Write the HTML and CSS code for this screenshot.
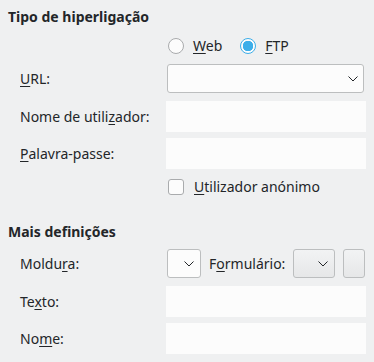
FILE: index.html
```html
<!DOCTYPE html>
<html>
<head>
<meta charset="utf-8">
<link rel="stylesheet" href="styles.css">
</head>
<body>
<div class="page">
  <div class="heading h1">Tipo de hiperligação</div>
  <div class="row radio-row">
    <div class="label"></div>
    <div class="control radios">
      <span class="radio"></span><span class="opt"><u>W</u>eb</span>
      <span class="radio checked"></span><span class="opt"><u>F</u>TP</span>
    </div>
  </div>
  <div class="row combo-row url-row">
    <div class="label"><u>U</u>RL:</div>
    <div class="control">
      <div class="combo wide">
        <svg class="chev" width="10" height="6" viewBox="0 0 10 6"><path d="M0.5 0.5 L5 5 L9.5 0.5" fill="none" stroke="#232629" stroke-width="1"/></svg>
      </div>
    </div>
  </div>
  <div class="row input-row r-user">
    <div class="label">Nome de utili<u>z</u>ador:</div>
    <div class="control"><div class="input"></div></div>
  </div>
  <div class="row input-row r-pass">
    <div class="label"><u>P</u>alavra-passe:</div>
    <div class="control"><div class="input"></div></div>
  </div>
  <div class="row check-row">
    <div class="label"></div>
    <div class="control checks">
      <span class="check"></span><span class="opt"><u>U</u>tilizador anónimo</span>
    </div>
  </div>
  <div class="heading h2">Mais definições</div>
  <div class="row combo-row frame-row">
    <div class="label">Moldu<u>r</u>a:</div>
    <div class="control frame">
      <div class="combo small">
        <svg class="chev" width="10" height="6" viewBox="0 0 10 6"><path d="M0.5 0.5 L5 5 L9.5 0.5" fill="none" stroke="#232629" stroke-width="1"/></svg>
      </div>
      <span class="inline-label">F<u>o</u>rmulário:</span>
      <div class="combo small btnlike form">
        <svg class="chev" width="10" height="6" viewBox="0 0 10 6"><path d="M0.5 0.5 L5 5 L9.5 0.5" fill="none" stroke="#232629" stroke-width="1"/></svg>
      </div>
      <div class="button"></div>
    </div>
  </div>
  <div class="row input-row r-text">
    <div class="label">Te<u>x</u>to:</div>
    <div class="control"><div class="input"></div></div>
  </div>
  <div class="row input-row r-name">
    <div class="label">No<u>m</u>e:</div>
    <div class="control"><div class="input"></div></div>
  </div>
</div>
</body>
</html>
```

FILE: styles.css
```css
html, body {
  margin: 0;
  padding: 0;
  background: #eff0f1;
}
body {
  font-family: "Noto Sans", "Open Sans", sans-serif;
  font-size: 14px;
  color: #232629;
}
.page {
  width: 374px;
  height: 362px;
  overflow: hidden;
}
u {
  text-decoration: underline;
  text-decoration-thickness: 1px;
  text-underline-offset: 2px;
}
.heading {
  font-weight: bold;
  line-height: 18px;
  height: 18px;
  padding-left: 8px;
}
.h1 { margin-top: 8px; }
.h2 { margin-top: 28px; }
.row {
  display: flex;
  align-items: center;
}
.label {
  width: 146px;
  padding-left: 20px;
  flex: none;
  white-space: nowrap;
}
.control {
  width: 200px;
  flex: none;
  height: 100%;
  display: flex;
  align-items: center;
}
.radio-row { margin-top: 12px; height: 16px; }
.url-row { margin-top: 10px; height: 29px; }
.r-user { margin-top: 8px; height: 31px; }
.r-pass { margin-top: 6px; height: 31px; }
.check-row { margin-top: 10px; height: 16px; }
.frame-row { margin-top: 8px; height: 29px; }
.r-text { margin-top: 8px; height: 31px; }
.r-name { margin-top: 6px; height: 31px; }

.radios, .checks { padding-left: 2px; box-sizing: border-box; }
.radio {
  width: 16px;
  height: 16px;
  box-sizing: border-box;
  border: 1px solid #a9abad;
  border-radius: 50%;
  background: #fcfcfc;
  flex: none;
}
.radio.checked {
  border: 1px solid #3daee9;
  background: radial-gradient(circle, #3daee9 0, #3daee9 5px, #fcfcfc 5.5px);
  margin-left: 18px;
}
.opt { margin-left: 9px; line-height: 16px; }
.check {
  width: 16px;
  height: 16px;
  box-sizing: border-box;
  border: 1px solid #a9abad;
  border-radius: 3px;
  background: #fcfcfc;
  flex: none;
}
.checks .opt { margin-left: 10px; }

.input {
  width: 200px;
  height: 31px;
  background: #fcfcfc;
}
.combo {
  height: 29px;
  box-sizing: border-box;
  border: 1px solid #bcbebf;
  border-radius: 3px;
  background: #fcfcfc;
  display: flex;
  align-items: center;
  justify-content: flex-end;
  flex: none;
}
.combo.wide { width: 197px; margin-left: 1px; padding-right: 5px; }
.combo.small { width: 34px; margin-left: 1px; padding-right: 6px; }
.combo.form { width: 42px; margin-left: 8px; padding-right: 6px; }
.btnlike, .button {
  background: linear-gradient(#f2f3f4, #e6e7e8);
}
.chev { display: block; }
.inline-label {
  margin-left: 8px;
  width: 76px;
  flex: none;
  white-space: nowrap;
  overflow: visible;
}
.button {
  width: 22px;
  height: 29px;
  box-sizing: border-box;
  border: 1px solid #bcbebf;
  border-radius: 3px;
  margin-left: 8px;
  flex: none;
}
```
